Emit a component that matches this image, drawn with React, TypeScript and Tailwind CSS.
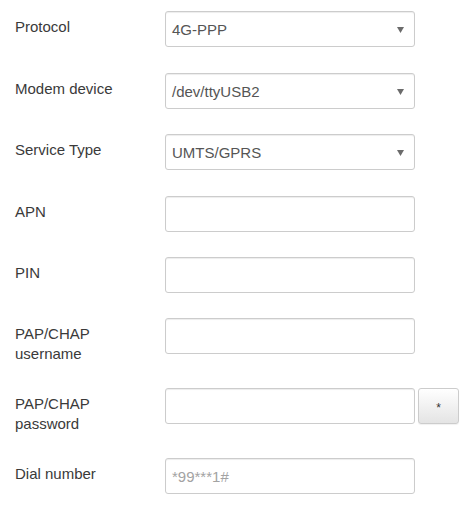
const fieldBase =
  "w-[250px] h-[36px] border border-[#cccccc] rounded-[3px] bg-white shadow-[inset_0_1px_1px_rgba(0,0,0,0.075)] px-[6px] flex items-center text-[15px] leading-[20px]";

function Label({ children }: { children: React.ReactNode }) {
  return (
    <div className="w-[165px] shrink-0 pl-[15px] pt-[6px] text-[15px] leading-[20px] text-[#3a3a3a]">
      {children}
    </div>
  );
}

function SelectBox({ value }: { value: string }) {
  return (
    <div className={`${fieldBase} justify-between pr-[10px] text-[#555555]`}>
      <span className="pt-[2px]">{value}</span>
      <svg width="7" height="6" viewBox="0 0 7 6" className="mt-[2px]">
        <polygon points="0,0 7,0 3.5,6" fill="#6b6b6b" />
      </svg>
    </div>
  );
}

function TextBox({ placeholder }: { placeholder?: string }) {
  return (
    <div className={`${fieldBase} text-[#a3a3a3]`}>
      <span className="pt-[2px]">{placeholder}</span>
    </div>
  );
}

export default function App() {
  return (
    <div
      className="w-[471px] h-[507px] bg-white pt-[11px]"
      style={{ fontFamily: '"Liberation Sans", Arial, sans-serif' }}
    >
      <div className="flex mb-[26px]">
        <Label>Protocol</Label>
        <SelectBox value="4G-PPP" />
      </div>
      <div className="flex mb-[25px]">
        <Label>Modem device</Label>
        <SelectBox value="/dev/ttyUSB2" />
      </div>
      <div className="flex mb-[26px]">
        <Label>Service Type</Label>
        <SelectBox value="UMTS/GPRS" />
      </div>
      <div className="flex mb-[25px]">
        <Label>APN</Label>
        <TextBox />
      </div>
      <div className="flex mb-[25px]">
        <Label>PIN</Label>
        <TextBox />
      </div>
      <div className="flex mb-[24px]">
        <Label>
          PAP/CHAP
          <br />
          username
        </Label>
        <TextBox />
      </div>
      <div className="flex mb-[24px]">
        <Label>
          PAP/CHAP
          <br />
          password
        </Label>
        <TextBox />
        <button className="ml-[3px] w-[41px] h-[36px] border border-[#cccccc] rounded-[3px] bg-gradient-to-b from-white to-[#e4e4e4] shadow-[0_1px_1px_rgba(0,0,0,0.06)] flex items-center justify-center text-[12px] text-[#333333] pt-[3px]">
          *
        </button>
      </div>
      <div className="flex">
        <Label>Dial number</Label>
        <TextBox placeholder="*99***1#" />
      </div>
    </div>
  );
}
